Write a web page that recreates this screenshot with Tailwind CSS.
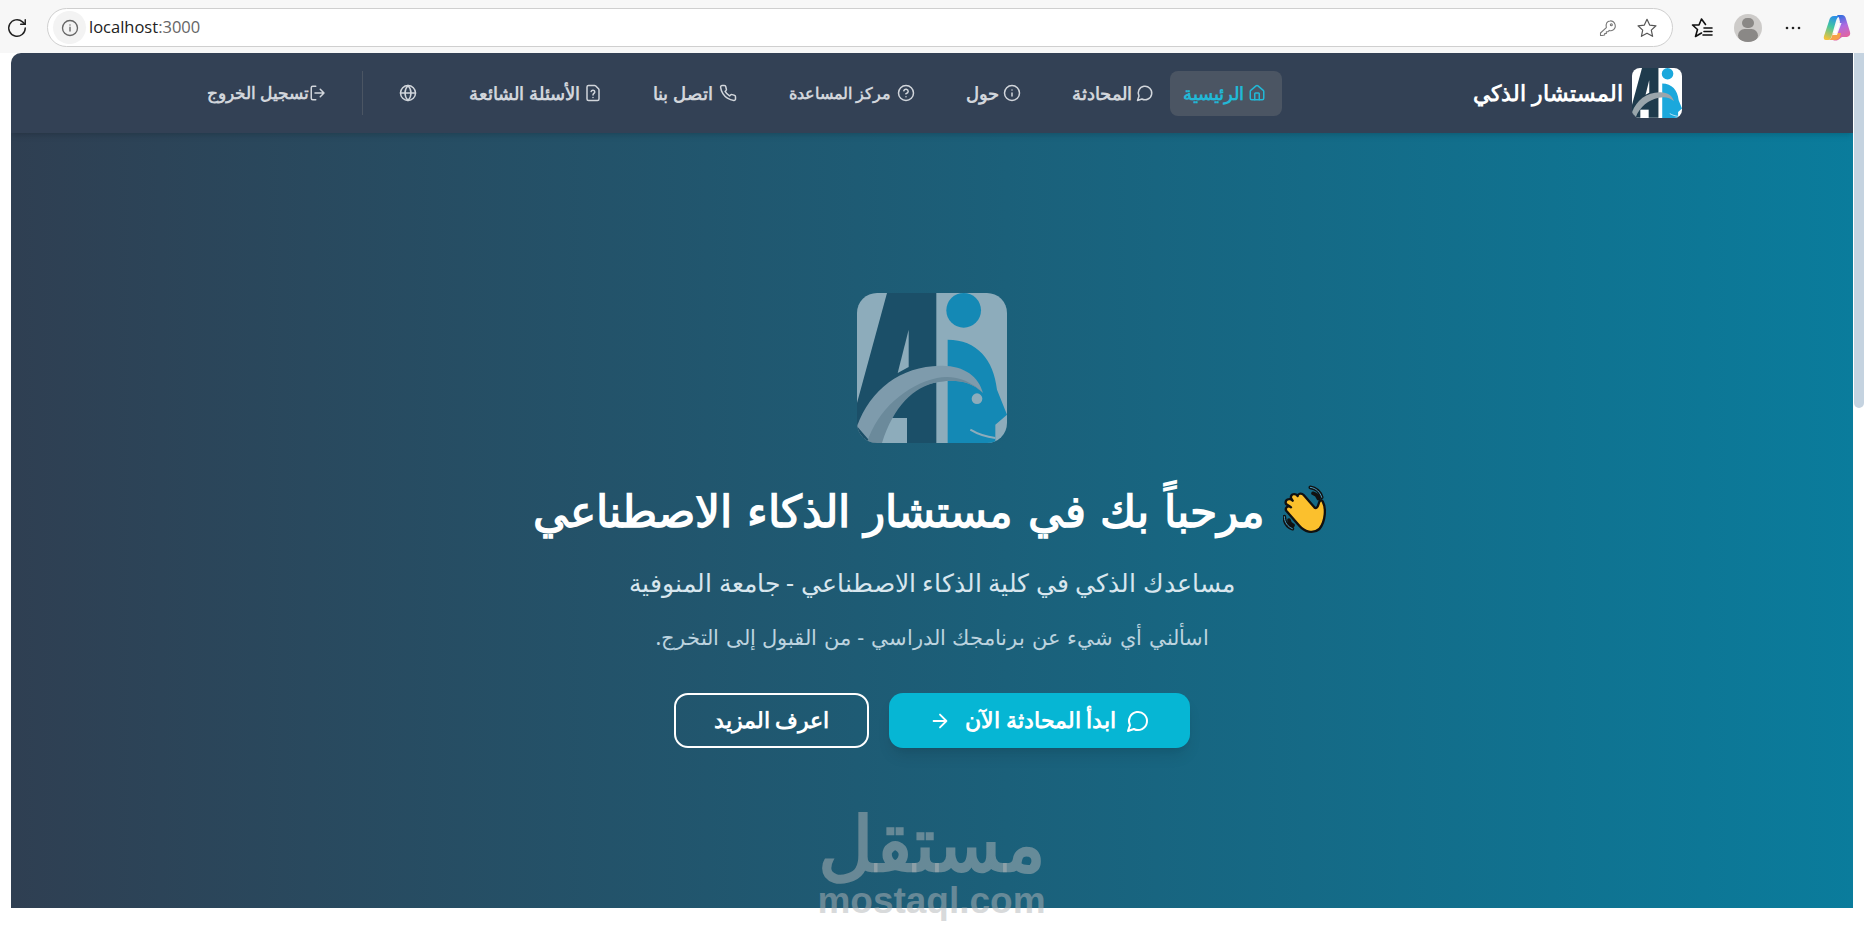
<!DOCTYPE html>
<html lang="ar" dir="rtl">
<head>
  <meta charset="UTF-8">
  <title>المستشار الذكي</title>
  <script src="https://cdn.jsdelivr.net/npm/@tailwindcss/browser@4"></script>
</head>
<body class="relative h-[938px] overflow-hidden bg-white font-['Noto_Sans',sans-serif]">

  <!-- Browser toolbar -->
  <div dir="ltr" class="flex h-[53px] items-center bg-[#f7f7f7] pt-[2px]">
    <svg class="ml-[6px] h-[22px] w-[22px] text-[#222]" viewBox="0 0 24 24" fill="none" stroke="currentColor" stroke-width="1.6" stroke-linecap="round" stroke-linejoin="round"><path d="M21 12a9 9 0 1 1-3-6.7L21 8"/><path d="M21 3v5h-5"/></svg>
    <div class="ml-[19px] flex h-[39px] w-[1626px] items-center rounded-full border border-[#cfcfcf] bg-white pl-[5px] pr-[14px]">
      <span class="flex h-[33px] w-[33px] items-center justify-center rounded-full bg-[#f3f3f3]">
        <svg class="h-[18px] w-[18px] text-[#666]" viewBox="0 0 24 24" fill="none" stroke="currentColor" stroke-width="1.8" stroke-linecap="round"><circle cx="12" cy="12" r="10"/><path d="M12 16v-5M12 8h.01"/></svg>
      </span>
      <span class="ml-[3px] font-['Open_Sans',sans-serif] text-[16.5px] text-[#222]">localhost<span class="text-[#666]">:3000</span></span>
      <svg class="ml-auto h-[20px] w-[20px] text-[#777]" viewBox="0 0 24 24" fill="none" stroke="currentColor" stroke-width="1.3" stroke-linejoin="round"><path d="M14.500 3.500a6 6 0 0 1 3.500 11c-1.500.9-3 .9-4.500.4L12 16.500H10V18.500H8V20.500L5 21H3V18L10 11.500C9 7 11 3.500 14.500 3.500Z"/><circle cx="16" cy="8" r="1.200"/></svg>
      <svg class="ml-[18px] h-[22px] w-[22px] text-[#555]" viewBox="0 0 24 24" fill="none" stroke="currentColor" stroke-width="1.300" stroke-linejoin="round"><path d="M12 2.500l2.900 6.300 6.900.8-5.100 4.700 1.400 6.800-6.100-3.400-6.100 3.400 1.400-6.800-5.100-4.700 6.900-.8z"/></svg>
    </div>
    <svg class="ml-[17px] h-[24px] w-[24px] text-[#111]" viewBox="0 0 24 24" fill="none" stroke="currentColor" stroke-width="1.600" stroke-linejoin="round" stroke-linecap="round"><path d="M15.500 8.500L11.500 3 9 9H2.500l5 4.500L5.500 20.500l6-3.500"/><path d="M14 12h8M14 15.500h8M13 19h9"/></svg>
    <span class="ml-[20px] flex h-[28px] w-[28px] flex-col items-center overflow-hidden rounded-full bg-[#cdcbc9]">
      <span class="mt-[4px] h-[12px] w-[12px] rounded-full bg-[#8a8886]"></span>
      <span class="mt-[1px] h-[14px] w-[20px] rounded-full bg-[#8a8886]"></span>
    </span>
    <svg class="ml-[22px] h-[18px] w-[18px] text-[#222]" viewBox="0 0 18 18" fill="currentColor"><circle cx="3" cy="9" r="1.300"/><circle cx="9" cy="9" r="1.300"/><circle cx="15" cy="9" r="1.300"/></svg>
    <svg class="ml-[21px] h-[28px] w-[28px]" viewBox="0 0 28 28">
      <defs>
        <linearGradient id="copilotLeft" x1="0.6" y1="0" x2="0.3" y2="1"><stop offset="0" stop-color="#2b8fe8"/><stop offset="0.45" stop-color="#43c6a0"/><stop offset="1" stop-color="#f5c23a"/></linearGradient>
        <linearGradient id="copilotRight" x1="0.4" y1="0" x2="0.7" y2="1"><stop offset="0" stop-color="#2a6fe0"/><stop offset="0.45" stop-color="#b06be0"/><stop offset="1" stop-color="#f0608f"/></linearGradient>
      </defs>
      <path d="M11 2h6q-3 1-4 5l-4 14q-1 5-4 5H3q-3 0-2-4L6 7q1-5 5-5Z" fill="url(#copilotLeft)"/>
      <path d="M14 1h5q3 0 4 4l4 13q1 4-3 5h-5l-4 3q-3 1-5 0h-1q3-1 4-5L17 8q0-4-3-7Z" fill="url(#copilotRight)"/>
      <path d="M5 26q3 0 4-4l1-3h8l-1 4q-1 3-5 3Z" fill="#f7a14a"/>
      <path d="M15 9h3.500L14 21H9.500Z" fill="#fff" opacity="0.900"/>
    </svg>
  </div>

  <!-- Page -->
  <div class="mx-[11px] overflow-hidden rounded-tl-[10px]">
    <header class="relative z-10 flex h-[80px] items-center bg-[#334155] pl-[196px] pr-[171px] shadow-md">
      <div class="flex w-[206px] shrink-0 items-center gap-[9px]">
        <svg class="h-[50px] w-[50px] shrink-0 rounded-[8px]" viewBox="0 0 450 450">
          <rect width="450" height="450" fill="#ffffff"/>
          <polygon points="90,0 238,0 238,448 0,448 0,330" fill="#1f3b4d"/>
          <polygon points="155,110 155,222 122,240" fill="#ffffff"/>
          <rect x="75" y="375" width="75" height="75" fill="#ffffff"/>
          <circle cx="320" cy="52" r="52" fill="#1ba8dc"/>
          <path d="M272 140C360 140 410 200 420 290L450 365L415 395V450H272Z" fill="#1ba8dc"/>
          <path d="M0 400C40 290 130 220 250 218C320 216 365 250 378 300C340 262 290 258 240 268C150 285 70 350 35 440Z" fill="#9aa5ab"/>
          <path d="M340 410C365 425 390 432 415 435" stroke="#ffffff" stroke-width="6" fill="none"/>
        </svg>
        <span class="whitespace-nowrap text-[21.6px] font-bold text-white">المستشار الذكي</span>
      </div>

      <nav class="flex flex-1 items-center whitespace-nowrap text-[17.6px] font-semibold text-[#d1d5db]">
        <a class="mr-[194px] flex h-[45px] w-[112px] items-center gap-[4px] rounded-lg bg-[#4b5563] px-4 text-[#22b8d6]">
          <svg class="h-[18px] w-[18px] shrink-0" viewBox="0 0 24 24" fill="none" stroke="currentColor" stroke-width="2" stroke-linecap="round" stroke-linejoin="round"><path d="M15 21v-8a1 1 0 0 0-1-1h-4a1 1 0 0 0-1 1v8"/><path d="M3 10a2 2 0 0 1 .709-1.528l7-5.999a2 2 0 0 1 2.582 0l7 5.999A2 2 0 0 1 21 10v9a2 2 0 0 1-2 2H5a2 2 0 0 1-2-2z"/></svg>
          الرئيسية
        </a>
        <a class="mr-[16px] flex w-[82px] items-center gap-[4px]">
          <svg class="h-[18px] w-[18px] shrink-0" viewBox="0 0 24 24" fill="none" stroke="currentColor" stroke-width="2" stroke-linecap="round" stroke-linejoin="round"><path d="M7.900 20A9 9 0 1 0 4 16.100L2 22Z"/></svg>
          المحادثة
        </a>
        <a class="mr-[51px] flex w-[54px] items-center gap-[4px]">
          <svg class="h-[18px] w-[18px] shrink-0" viewBox="0 0 24 24" fill="none" stroke="currentColor" stroke-width="2" stroke-linecap="round" stroke-linejoin="round"><circle cx="12" cy="12" r="10"/><path d="M12 16v-4M12 8h.01"/></svg>
          حول
        </a>
        <a class="mr-[52px] flex w-[128px] items-center gap-[6px] text-[16px]">
          <svg class="h-[18px] w-[18px] shrink-0" viewBox="0 0 24 24" fill="none" stroke="currentColor" stroke-width="2" stroke-linecap="round" stroke-linejoin="round"><circle cx="12" cy="12" r="10"/><path d="M9.090 9a3 3 0 0 1 5.830 1c0 2-3 3-3 3M12 17h.01"/></svg>
          مركز المساعدة
        </a>
        <a class="mr-[50px] flex w-[85px] items-center gap-[6px]">
          <svg class="h-[18px] w-[18px] shrink-0" viewBox="0 0 24 24" fill="none" stroke="currentColor" stroke-width="2" stroke-linecap="round" stroke-linejoin="round"><path d="M22 16.920v3a2 2 0 0 1-2.180 2 19.790 19.790 0 0 1-8.630-3.070 19.500 19.500 0 0 1-6-6 19.790 19.790 0 0 1-3.070-8.670A2 2 0 0 1 4.110 2h3a2 2 0 0 1 2 1.720 12.840 12.840 0 0 0 .7 2.810 2 2 0 0 1-.45 2.110L8.090 9.910a16 16 0 0 0 6 6l1.270-1.270a2 2 0 0 1 2.110-.45 12.840 12.840 0 0 0 2.810.7A2 2 0 0 1 22 16.920z"/></svg>
          اتصل بنا
        </a>
        <a class="mr-[50px] flex w-[130px] items-center gap-[4px]">
          <svg class="h-[18px] w-[18px] shrink-0" viewBox="0 0 24 24" fill="none" stroke="currentColor" stroke-width="2" stroke-linecap="round" stroke-linejoin="round"><path d="M6 22a2 2 0 0 1-2-2V4a2 2 0 0 1 2-2h8a2.400 2.400 0 0 1 1.700.7l3.600 3.600A2.400 2.400 0 0 1 20 8v12a2 2 0 0 1-2 2z"/><path d="M12 18h.01M9.500 10a2.500 2.500 0 0 1 4.900.7c0 1.700-2.400 2-2.400 3.800"/></svg>
          الأسئلة الشائعة
        </a>
        <svg class="mr-[55px] h-[18px] w-[18px] shrink-0" viewBox="0 0 24 24" fill="none" stroke="currentColor" stroke-width="2" stroke-linecap="round" stroke-linejoin="round"><circle cx="12" cy="12" r="10"/><path d="M12 2a14.500 14.500 0 0 0 0 20 14.500 14.500 0 0 0 0-20M2 12h20"/></svg>
        <span class="mr-[36px] h-[44px] w-px bg-[#4b5563]"></span>
        <a class="mr-[35px] flex items-center text-[16.5px]">
          <svg class="h-[18px] w-[18px] shrink-0" viewBox="0 0 24 24" fill="none" stroke="currentColor" stroke-width="2" stroke-linecap="round" stroke-linejoin="round"><path d="M15 3h4a2 2 0 0 1 2 2v14a2 2 0 0 1-2 2h-4" transform="matrix(-1 0 0 1 24 0)"/><path d="M15 7l5 5-5 5M20 12H8"/></svg>
          تسجيل الخروج
        </a>
      </nav>
    </header>

    <!-- Hero -->
    <main class="flex h-[775px] flex-col items-center bg-linear-to-r/srgb from-[#2f3f52] to-[#0a7c9c] pt-[160px] text-white">
      <svg class="h-[150px] w-[150px] rounded-[20px]" viewBox="0 0 450 450">
        <rect width="450" height="450" fill="#8dacbb"/>
        <polygon points="90,0 238,0 238,450 0,450 0,330" fill="#1b4f68"/>
        <polygon points="155,110 155,222 122,240" fill="#8dacbb"/>
        <rect x="75" y="375" width="75" height="75" fill="#8dacbb"/>
        <circle cx="320" cy="52" r="52" fill="#1489b5"/>
        <path d="M272 140C360 140 410 200 420 290L450 365L415 395V450H272Z" fill="#1489b5"/>
        <path d="M0 400C40 290 130 220 250 218C320 216 365 250 378 300C340 262 290 258 240 268C150 285 70 350 35 440Z" fill="#7e9bac"/>
        <path d="M30 450C60 350 150 275 240 255C290 245 340 262 378 300C340 262 290 258 240 268C170 282 110 340 75 450Z" fill="#6b8a9b"/>
        <circle cx="360" cy="317" r="16" fill="#8dacbb"/>
        <path d="M340 410C365 425 390 432 415 435" stroke="#8dacbb" stroke-width="6" fill="none"/>
      </svg>

      <h1 class="mt-[37px] flex h-[60px] items-center gap-[18px] text-[44.3px] font-bold [word-spacing:3px]">
        <svg class="h-[52px] w-[48px]" viewBox="36 30 144 156">
          <path d="M118 40C135 42 148 55 152 70M126 58C134 60 140 66 142 74M40 128C40 145 50 158 64 164M54 138C55 146 60 152 66 154" fill="none" stroke="#111" stroke-width="11" stroke-linecap="round"/>
          <path d="M118 40C135 42 148 55 152 70M40 128C40 145 50 158 64 164" fill="none" stroke="#4a9fc4" stroke-width="3" stroke-linecap="round"/>
          <path d="M155 82C165 100 165 140 145 165C125 182 100 172 85 155L47 112C40 103 50 92 60 100L45 90C40 78 55 70 65 80L60 72C58 60 72 56 80 66C80 60 90 55 98 63L130 100C135 105 140 100 142 92C145 80 150 75 155 82Z" fill="#fbc02d" stroke="#111" stroke-width="7" stroke-linejoin="round"/>
        </svg>
        مرحباً بك في مستشار الذكاء الاصطناعي
      </h1>

      <p class="mt-[26px] text-[24.9px] leading-[32px] text-[#d8e6ee]">مساعدك الذكي في كلية الذكاء الاصطناعي - جامعة المنوفية</p>
      <p class="mt-[23px] text-[21.4px] leading-[32px] text-[#bcd3df] [word-spacing:1px]">اسألني أي شيء عن برنامجك الدراسي - من القبول إلى التخرج.</p>

      <div class="mt-[40px] flex gap-[20px]">
        <a class="flex h-[55px] w-[301px] items-center justify-center gap-[10px] rounded-[14px] bg-[#06b6d4] text-[21.6px] font-semibold shadow-lg">
          <svg class="h-[24px] w-[24px]" viewBox="0 0 24 24" fill="none" stroke="currentColor" stroke-width="2" stroke-linecap="round" stroke-linejoin="round"><path d="M7.900 20A9 9 0 1 0 4 16.100L2 22Z"/></svg>
          ابدأ المحادثة الآن
          <svg class="mr-[4px] h-[22px] w-[22px]" viewBox="0 0 24 24" fill="none" stroke="currentColor" stroke-width="2" stroke-linecap="round" stroke-linejoin="round"><path d="M5 12h14M12 5l7 7-7 7"/></svg>
        </a>
        <a class="flex h-[55px] w-[195px] items-center justify-center rounded-[14px] border-2 border-white text-[21.6px] font-semibold">اعرف المزيد</a>
      </div>
    </main>
  </div>

  <!-- Scrollbar thumb -->
  <div class="absolute right-0 top-[53px] h-[355px] w-[10px] rounded-b-full rounded-tr-[4px] bg-[#c5d3e0]"></div>

  <!-- Watermark -->
  <div dir="ltr" class="pointer-events-none absolute left-[819px] top-[797px] flex w-[225px] flex-col items-center text-[#b2b5b8]/50">
    <span dir="rtl" class="text-[76px] font-bold leading-[90px]">مستقل</span>
    <span class="-mt-[4px] font-['Liberation_Sans',sans-serif] text-[37px] font-bold leading-[36px]">mostaql.com</span>
  </div>
</body>
</html>
